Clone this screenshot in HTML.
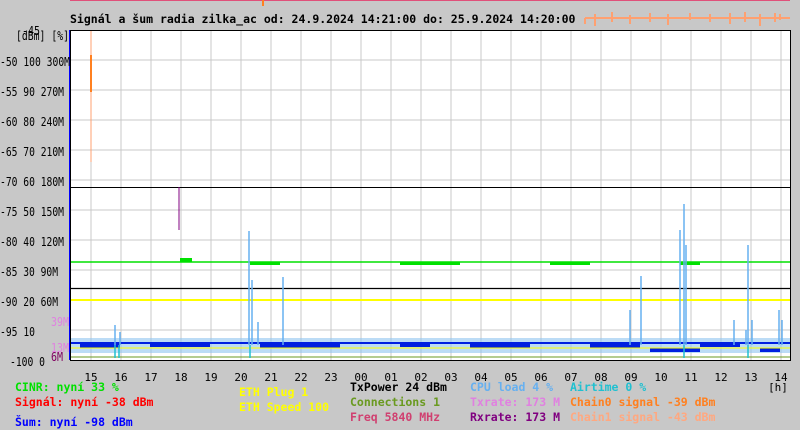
<!DOCTYPE html><html><head><style>
body{margin:0;background:#c8c8c8;width:800px;height:430px;overflow:hidden}
svg{display:block}
text{font-family:"DejaVu Sans Mono","Liberation Mono",monospace;font-size:11.5px;font-weight:bold}
.ax{font-size:12px;font-weight:normal}
.hr{font-size:11px;font-weight:normal}
</style></head><body>
<svg width="800" height="430" xmlns="http://www.w3.org/2000/svg">
<rect width="800" height="430" fill="#c8c8c8"/>
<line x1="70" y1="0.5" x2="790" y2="0.5" stroke="#e0507a" stroke-width="1"/>
<g stroke="#ffa070" stroke-width="2">
<path d="M585 18V24M595 14V26M612 12V22M630 15V24M650 13V22M668 14V25M690 13V20M710 14V22M730 13V24M745 12V22M760 14V26M775 13V22M780 14V20M585 18H790"/>
</g>
<line x1="263" y1="0" x2="263" y2="6" stroke="#ff8020" stroke-width="2"/>
<text x="70" y="23" fill="#000">Signál a šum radia zilka_ac od: 24.9.2024 14:21:00 do: 25.9.2024 14:20:00</text>
<rect x="70" y="30" width="720" height="330" fill="#fff"/>
<g stroke="#c8c8c8" stroke-width="1">
<path d="M91 30V360M121 30V360M151 30V360M181 30V360M211 30V360M241 30V360M271 30V360M301 30V360M331 30V360M361 30V360M391 30V360M421 30V360M451 30V360M481 30V360M511 30V360M541 30V360M571 30V360M601 30V360M631 30V360M661 30V360M691 30V360M721 30V360M751 30V360M781 30V360"/>
<path d="M70 60H790M70 90H790M70 120H790M70 150H790M70 180H790M70 210H790M70 240H790M70 270H790M70 300H790M70 330H790"/>
</g>
<line x1="91" y1="30" x2="91" y2="162" stroke="#ffa070" stroke-width="1"/>
<line x1="91" y1="55" x2="91" y2="92" stroke="#ff8020" stroke-width="2"/>
<line x1="70" y1="187.5" x2="790" y2="187.5" stroke="#000" stroke-width="1"/>
<line x1="179" y1="187" x2="179" y2="230" stroke="#800080" stroke-width="1"/>
<path d="M70 262H790" stroke="#00e000" stroke-width="1.5"/>
<g fill="#00e000"><rect x="180" y="258" width="12" height="4"/><rect x="250" y="262" width="30" height="3"/><rect x="400" y="262" width="60" height="3"/><rect x="550" y="262" width="40" height="3"/><rect x="680" y="262" width="20" height="3"/></g>
<line x1="70" y1="288.5" x2="790" y2="288.5" stroke="#000" stroke-width="1.2"/>
<line x1="70" y1="300" x2="790" y2="300" stroke="#ffff00" stroke-width="2"/>
<rect x="70" y="338" width="720" height="15" fill="#90c4f0" opacity="0.6"/>
<rect x="70" y="342" width="720" height="2" fill="#0020e0"/>
<g fill="#0020e0"><rect x="80" y="344" width="40" height="4"/><rect x="150" y="344" width="60" height="3"/><rect x="260" y="344" width="80" height="4"/><rect x="400" y="344" width="30" height="3"/><rect x="470" y="344" width="60" height="4"/><rect x="590" y="344" width="50" height="4"/><rect x="650" y="348" width="50" height="4"/><rect x="700" y="344" width="40" height="3"/><rect x="760" y="348" width="20" height="4"/></g>
<line x1="70" y1="348" x2="790" y2="348" stroke="#ffff00" stroke-width="1"/>
<line x1="70" y1="357" x2="790" y2="357" stroke="#6a9a20" stroke-width="1"/>
<g stroke="#66b0f0" stroke-width="1.5">
<path d="M115 325V345M120 332V345M249 231V345M252 280V345M258 322V345M283 277V345M641 276V345M684 204V345M686 245V345M680 230V345M748 245V345M752 320V345M779 310V345M782 320V345M630 310V345M734 320V345M746 330V345"/>
</g>
<g stroke="#20c0d0" stroke-width="1.5"><path d="M115 345V358M119 345V358M250 345V358M684 345V358M748 345V358"/></g>
<line x1="70" y1="30" x2="70" y2="360" stroke="#0000ff" stroke-width="2"/>
<rect x="70.5" y="30.5" width="720" height="330" fill="none" stroke="#000"/>
<g fill="#000" class="ax">
<text class="ax" x="16" y="40" textLength="53" lengthAdjust="spacingAndGlyphs">[dBm] [%]</text>
<text class="ax" x="22" y="35" textLength="18" lengthAdjust="spacingAndGlyphs">-45</text>
<text class="ax" x="0" y="66" textLength="70" lengthAdjust="spacingAndGlyphs">-50 100 300M</text>
<text class="ax" x="0" y="96" textLength="64" lengthAdjust="spacingAndGlyphs">-55 90 270M</text>
<text class="ax" x="0" y="126" textLength="64" lengthAdjust="spacingAndGlyphs">-60 80 240M</text>
<text class="ax" x="0" y="156" textLength="64" lengthAdjust="spacingAndGlyphs">-65 70 210M</text>
<text class="ax" x="0" y="186" textLength="64" lengthAdjust="spacingAndGlyphs">-70 60 180M</text>
<text class="ax" x="0" y="216" textLength="64" lengthAdjust="spacingAndGlyphs">-75 50 150M</text>
<text class="ax" x="0" y="246" textLength="64" lengthAdjust="spacingAndGlyphs">-80 40 120M</text>
<text class="ax" x="0" y="276" textLength="58" lengthAdjust="spacingAndGlyphs">-85 30 90M</text>
<text class="ax" x="0" y="306" textLength="58" lengthAdjust="spacingAndGlyphs">-90 20 60M</text>
<text class="ax" x="0" y="336" textLength="35" lengthAdjust="spacingAndGlyphs">-95 10</text>
<text class="ax" x="10" y="366" textLength="35" lengthAdjust="spacingAndGlyphs">-100 0</text>
</g>
<text class="ax" x="51" y="326" fill="#e080e0" textLength="18" lengthAdjust="spacingAndGlyphs">39M</text>
<text class="ax" x="51" y="352" fill="#e080e0" textLength="18" lengthAdjust="spacingAndGlyphs">13M</text>
<text class="ax" x="51" y="361" fill="#800060" textLength="12" lengthAdjust="spacingAndGlyphs">6M</text>
<g fill="#000" text-anchor="middle">
<text class="hr" x="91" y="381">15</text><text class="hr" x="121" y="381">16</text><text class="hr" x="151" y="381">17</text><text class="hr" x="181" y="381">18</text><text class="hr" x="211" y="381">19</text><text class="hr" x="241" y="381">20</text><text class="hr" x="271" y="381">21</text><text class="hr" x="301" y="381">22</text><text class="hr" x="331" y="381">23</text><text class="hr" x="361" y="381">00</text><text class="hr" x="391" y="381">01</text><text class="hr" x="421" y="381">02</text><text class="hr" x="451" y="381">03</text><text class="hr" x="481" y="381">04</text><text class="hr" x="511" y="381">05</text><text class="hr" x="541" y="381">06</text><text class="hr" x="571" y="381">07</text><text class="hr" x="601" y="381">08</text><text class="hr" x="631" y="381">09</text><text class="hr" x="661" y="381">10</text><text class="hr" x="691" y="381">11</text><text class="hr" x="721" y="381">12</text><text class="hr" x="751" y="381">13</text><text class="hr" x="781" y="381">14</text>
<text class="hr" x="778" y="391">[h]</text>
</g>
<text x="15" y="391" fill="#00e000">CINR: nyní 33 %</text>
<text x="15" y="406" fill="#ff0000">Signál: nyní -38 dBm</text>
<text x="15" y="426" fill="#0000ff">Šum: nyní -98 dBm</text>
<text x="239" y="396" fill="#ffff00">ETH Plug 1</text>
<text x="239" y="411" fill="#ffff00">ETH Speed 100</text>
<text x="350" y="391" fill="#000">TxPower 24 dBm</text>
<text x="350" y="406" fill="#6a9a20">Connections 1</text>
<text x="350" y="421" fill="#d04070">Freq 5840 MHz</text>
<text x="470" y="391" fill="#66b0f0">CPU load 4 %</text>
<text x="470" y="406" fill="#e080e0">Txrate: 173 M</text>
<text x="470" y="421" fill="#800080">Rxrate: 173 M</text>
<text x="570" y="391" fill="#20c0d0">Airtime 0 %</text>
<text x="570" y="406" fill="#ff8020">Chain0 signal -39 dBm</text>
<text x="570" y="421" fill="#ffa880">Chain1 signal -43 dBm</text>
</svg>
</body></html>
